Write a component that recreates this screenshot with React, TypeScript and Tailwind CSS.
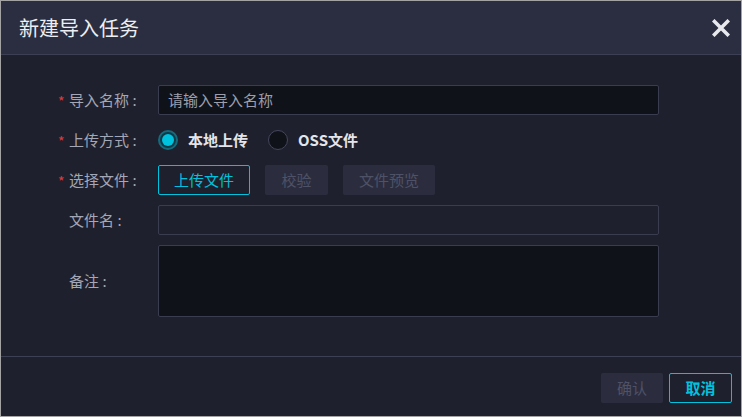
import React from 'react';

const font = { fontFamily: '"Noto Sans CJK SC", "Noto Sans", sans-serif' };

const Label: React.FC<{ text: string; required?: boolean }> = ({ text, required }) => (
  <div className="w-[100px] shrink-0 flex items-center text-[15px] text-[#a4a7b5]">
    <span className="w-[11px] text-[#e03b3b] text-[14px] leading-none pt-[2px]">{required ? '*' : ''}</span>
    <span>{text} :</span>
  </div>
);

const Radio: React.FC<{ checked?: boolean; label: string }> = ({ checked, label }) => (
  <div className="flex items-center gap-[10px]">
    {checked ? (
      <span className="w-[20px] h-[20px] rounded-full border-2 border-[#156b7d] bg-[#0e3a48] flex items-center justify-center">
        <span className="w-[12px] h-[12px] rounded-full bg-[#00c1de]" />
      </span>
    ) : (
      <span className="w-[20px] h-[20px] rounded-full border border-[#44475c] bg-[#10121a]" />
    )}
    <span className="text-[15px] font-semibold text-[#e4e5ea]">{label}</span>
  </div>
);

export default function App() {
  return (
    <div style={font} className="w-[742px] h-[417px] border border-[#a3a3a3] bg-[#1f202d] flex flex-col overflow-hidden">
      <div className="h-[54px] shrink-0 bg-[#2b2e41] border-b border-[#3d4054] flex items-center justify-between pl-[18px] pr-[10px]">
        <span className="text-[20px] text-[#eceef2]">新建导入任务</span>
        <svg width="18" height="18" viewBox="0 0 18 18" className="mr-[1px]">
          <path d="M2.5 2.5 L15.5 15.5 M15.5 2.5 L2.5 15.5" stroke="#e8e9ee" strokeWidth="3.6" strokeLinecap="square" />
        </svg>
      </div>

      <div className="flex-1 pt-[30px] pl-[57px] flex flex-col gap-[10px]">
        <div className="flex items-center h-[30px]">
          <Label text="导入名称" required />
          <div className="w-[501px] h-[30px] rounded-[2px] border border-[#3a3c50] bg-[#10121a] flex items-center px-[9px] text-[15px] text-[#9c9fab]">
            请输入导入名称
          </div>
        </div>
        <div className="flex items-center h-[30px]">
          <Label text="上传方式" required />
          <div className="flex items-center gap-[20px]">
            <Radio checked label="本地上传" />
            <Radio label="OSS文件" />
          </div>
        </div>
        <div className="flex items-center h-[30px]">
          <Label text="选择文件" required />
          <div className="flex items-center gap-[15px]">
            <button className="w-[92px] h-[30px] rounded-[2px] border border-[#00c1de] text-[15px] text-[#00c1de]">上传文件</button>
            <button className="w-[63px] h-[30px] rounded-[2px] bg-[#2b2d3f] text-[15px] text-[#4f5266]">校验</button>
            <button className="w-[92px] h-[30px] rounded-[2px] bg-[#2b2d3f] text-[15px] text-[#4f5266]">文件预览</button>
          </div>
        </div>
        <div className="flex items-center h-[30px]">
          <Label text="文件名" />
          <div className="w-[501px] h-[30px] rounded-[2px] border border-[#3a3c50] bg-[#1f202d]" />
        </div>
        <div className="flex items-center">
          <Label text="备注" />
          <div className="w-[501px] h-[72px] rounded-[2px] border border-[#3a3c50] bg-[#10121a]" />
        </div>
      </div>

      <div className="h-[60px] shrink-0 border-t border-[#3d4054] flex items-start justify-end gap-[6px] pt-[16px] pr-[9px]">
        <button className="w-[62px] h-[30px] rounded-[2px] bg-[#2b2d3f] text-[15px] text-[#4f5266]">确认</button>
        <button className="w-[63px] h-[30px] rounded-[2px] border border-[#00c1de] text-[15px] font-semibold text-[#00c1de]">取消</button>
      </div>
    </div>
  );
}
